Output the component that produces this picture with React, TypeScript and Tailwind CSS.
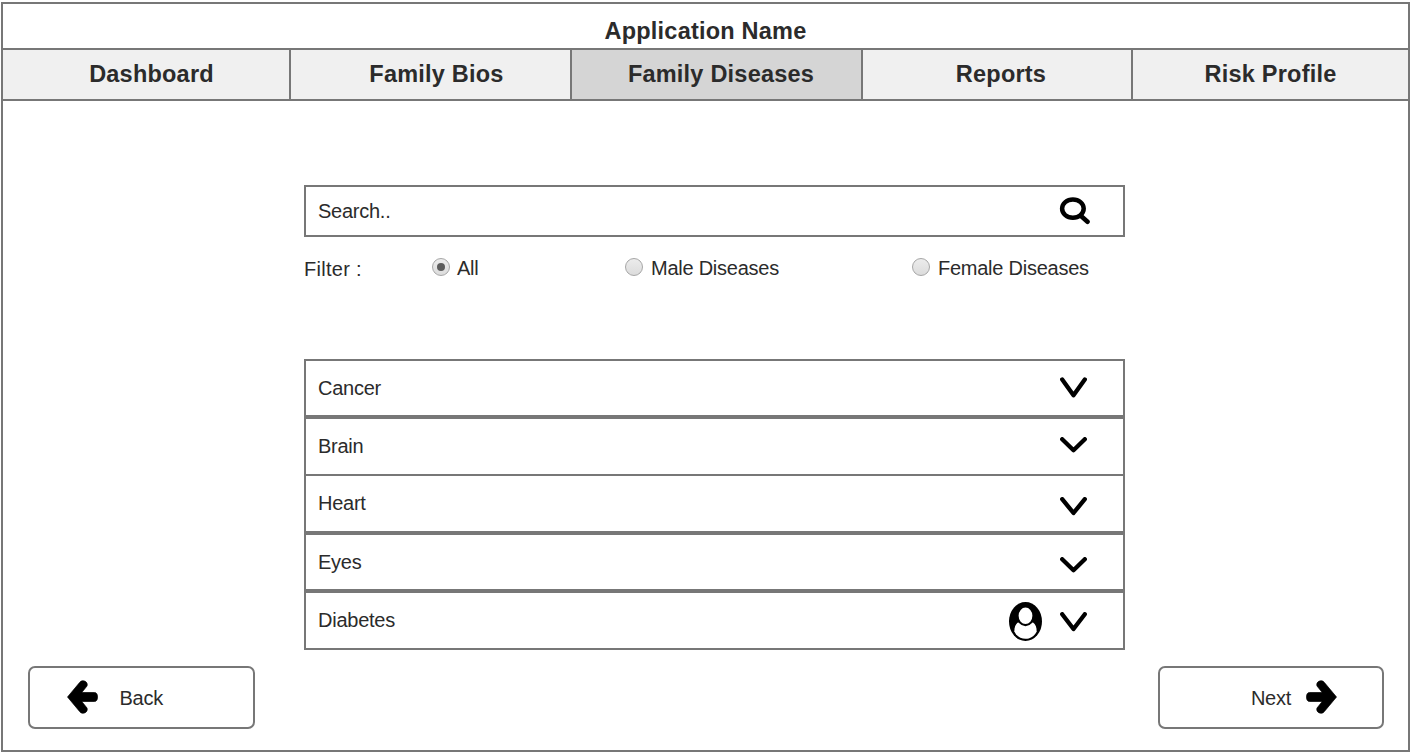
import type { ReactNode } from "react";

const tabs = [
  { label: "Dashboard", cell: "w-[288px] border-r-2 bg-[#f0f0f0] pl-[11px]" },
  { label: "Family Bios", cell: "w-[281px] border-r-2 bg-[#f0f0f0] pl-[12px]" },
  { label: "Family Diseases", cell: "w-[291px] border-r-2 bg-[#d5d5d5] pl-[9px]" },
  { label: "Reports", cell: "w-[270px] border-r-2 bg-[#f0f0f0] pl-[8px]" },
  { label: "Risk Profile", cell: "flex-1 bg-[#f0f0f0]" },
];

const filters = [
  { label: "All", checked: true, place: "ml-[69px] w-[193px] gap-[7px]" },
  { label: "Male Diseases", checked: false, place: "w-[287px] gap-2" },
  { label: "Female Diseases", checked: false, place: "gap-2" },
];

const diseases = [
  { name: "Cancer", row: "h-[58px] border-b-4", d: "M2.2 2.4 L13.5 18.2 L24.8 2.4", h: 21, icon: "-mt-px", person: false },
  { name: "Brain", row: "h-[57px] border-b-2", d: "M2.2 2.2 L13.5 13.2 L24.8 2.2", h: 16, icon: "-mt-[2px]", person: false },
  { name: "Heart", row: "h-[59px] border-b-4", d: "M2.2 2.2 L13.5 16 L24.8 2.2", h: 19, icon: "mt-[6px]", person: false },
  { name: "Eyes", row: "h-[58px] border-b-4", d: "M2.2 2.2 L13.5 13.2 L24.8 2.2", h: 16, icon: "mt-[6px]", person: false },
  { name: "Diabetes", row: "h-[55px]", d: "M2.2 2.2 L13.5 17 L24.8 2.2", h: 20, icon: "mt-[3px]", person: true },
];

function SearchIcon() {
  return (
    <svg width="31" height="28" viewBox="0 0 31 28" fill="none" stroke="#000">
      <ellipse cx="13.9" cy="11.6" rx="10.8" ry="9.2" strokeWidth="4.5" />
      <path d="M21.5 18.5 L28.5 24.7" strokeWidth="4.6" strokeLinecap="round" />
    </svg>
  );
}

function Chevron({ d, h }: { d: string; h: number }) {
  return (
    <svg width="27" height={h} viewBox={`0 0 27 ${h}`} fill="none">
      <path d={d} stroke="#000" strokeWidth="4.3" strokeLinecap="round" strokeLinejoin="round" />
    </svg>
  );
}

function PersonIcon() {
  return (
    <svg width="33" height="39" viewBox="0 0 33 39">
      <ellipse cx="16.5" cy="19.5" rx="16.5" ry="19.5" fill="#000" />
      <path d="M5.3 29.5 C5.3 25.500 6.500 22 9 20.600 H24 C26.500 22 27.700 25.500 27.700 29.500 C23 39.300 10 39.300 5.300 29.500 Z" fill="#fff" />
      <ellipse cx="16.500" cy="13.800" rx="8" ry="9.300" fill="#fff" stroke="#000" strokeWidth="2.200" />
    </svg>
  );
}

function Arrow({ flip }: { flip?: boolean }) {
  return (
    <svg width="31" height="34" viewBox="0 0 31 34" className={flip ? "-scale-x-100" : ""}>
      <path d="M0.500 17 L12.800 2.300 C15.600 -1.200 21.600 1.800 20 6 L14.800 12.500 H27.500 Q30.500 12.700 30.500 17 Q30.500 21.300 27.500 21.500 H14.800 L20 28 C21.600 32.200 15.600 35.200 12.800 31.700 Z" fill="#000" stroke="#000" strokeWidth="0.700" strokeLinejoin="round" />
    </svg>
  );
}

function Radio({ checked }: { checked: boolean }) {
  return (
    <span className="flex h-[18px] w-[18px] items-center justify-center rounded-full border border-[#a6a6a6] bg-linear-to-b from-[#ececec] to-[#dcdcdc]">
      {checked && <span className="h-2 w-2 rounded-full bg-[#5c5c5c]" />}
    </span>
  );
}

function NavButton({ children, place }: { children: ReactNode; place: string }) {
  return (
    <button className={`flex h-[63px] items-center rounded-[7px] border-2 border-[#777] ${place}`}>{children}</button>
  );
}

export default function App() {
  return (
    <div className="h-[754px] w-[1412px] bg-white pt-[2px] pl-[1px] font-['Liberation_Sans',Arial,sans-serif] text-[20px] leading-6 tracking-[-0.25px] text-[#2b2b2b]">
      <div className="flex h-[750px] w-[1409px] flex-col border-2 border-[#777]">
        <header className="flex h-[46px] items-end justify-center border-b-2 border-[#777] pb-[3px] text-[23.5px] leading-7 font-bold tracking-[0.22px]">
          Application Name
        </header>
        <nav className="flex h-[51px] border-b-2 border-[#777] text-[23.5px] font-bold tracking-[0.22px]">
          {tabs.map((tab) => (
            <a key={tab.label} className={`flex items-center justify-center border-[#777] pb-[2px] ${tab.cell}`}>
              {tab.label}
            </a>
          ))}
        </nav>

        <main className="ml-[301px] w-[821px] pt-[84px]">
          <div className="flex h-[52px] items-center justify-between border-2 border-[#777] pr-[33px] pl-3">
            <span>Search..</span>
            <SearchIcon />
          </div>

          <div className="mt-[18px] flex h-6 items-center">
            <span className="w-[59px] pt-[4px] tracking-[0.3px] whitespace-nowrap">Filter :</span>
            {filters.map((f) => (
              <label key={f.label} className={`flex items-center whitespace-nowrap ${f.place}`}>
                <Radio checked={f.checked} />
                <span className="pt-[2px]">{f.label}</span>
              </label>
            ))}
          </div>

          <ul className="mt-[80px] border-2 border-[#777]">
            {diseases.map((item) => (
              <li key={item.name} className={`flex items-center border-[#777] pr-[36px] pb-px pl-3 ${item.row}`}>
                <span className="flex-1">{item.name}</span>
                {item.person && (
                  <span className="mt-[3px] mr-[18px]">
                    <PersonIcon />
                  </span>
                )}
                <span className={item.icon}>
                  <Chevron d={item.d} h={item.h} />
                </span>
              </li>
            ))}
          </ul>
        </main>

        <footer className="mt-4 flex justify-between pr-[24px] pl-[25px]">
          <NavButton place="w-[227px] gap-[22px] pl-[36.5px]">
            <span className="-mt-[2px]">
              <Arrow />
            </span>
            <span>Back</span>
          </NavButton>
          <NavButton place="w-[226px] justify-end gap-[15px] pr-[45px]">
            <span>Next</span>
            <span className="-mt-[2px]">
              <Arrow flip />
            </span>
          </NavButton>
        </footer>
      </div>
    </div>
  );
}
